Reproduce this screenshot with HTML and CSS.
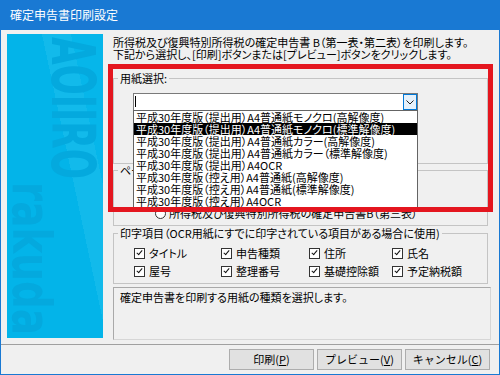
FILE: index.html
```html
<html>
<head>
<title>確定申告書印刷設定</title>
<meta charset="utf-8">
<link rel="stylesheet" href="styles.css">
</head>
<body>
<div class="window">
<div class="titlebar">確定申告書印刷設定</div>
<div class="client">
<div class="main">
<div class="banner">
<span class="wm wm-top">AOIIRO</span>
<span class="wm wm-bottom">rakuda</span>
</div>
<div class="content">
<p class="intro">所得税及び復興特別所得税の確定申告書 B（第一表・第二表）を印刷します。<br>下記から選択し、[印刷]ボタンまたは[プレビュー]ボタンをクリックします。</p>
<fieldset class="group group-paper">
<legend>用紙選択:</legend>
<div class="combo"><span class="caret"></span><span class="combo-btn"><svg width="8" height="5" viewBox="0 0 8 5"><polyline points="0.5,0.5 4,4 7.5,0.5" fill="none" stroke="#222" stroke-width="1"/></svg></span></div>
</fieldset>
<fieldset class="group group-page">
<legend>ページ指定</legend>
<label class="radio"><span class="radio-dot"></span>所得税及び復興特別所得税の確定申告書B（第三表）</label>
</fieldset>
<fieldset class="group group-items">
<legend>印字項目（OCR用紙にすでに印字されている項目がある場合に使用)</legend>
<div class="checks">
<label class="check"><span class="box"></span>タイトル</label>
<label class="check"><span class="box"></span>申告種類</label>
<label class="check"><span class="box"></span>住所</label>
<label class="check"><span class="box"></span>氏名</label>
<label class="check"><span class="box"></span>屋号</label>
<label class="check"><span class="box"></span>整理番号</label>
<label class="check"><span class="box"></span>基礎控除額</label>
<label class="check"><span class="box"></span>予定納税額</label>
</div>
</fieldset>
<div class="desc">確定申告書を印刷する用紙の種類を選択します。</div>
<ul class="droplist">
<li>平成30年度版（提出用）A4普通紙モノクロ(高解像度)</li>
<li class="sel">平成30年度版（提出用）A4普通紙モノクロ(標準解像度)</li>
<li>平成30年度版（提出用）A4普通紙カラー(高解像度)</li>
<li>平成30年度版（提出用）A4普通紙カラー（標準解像度)</li>
<li>平成30年度版（提出用）A4OCR</li>
<li>平成30年度版（控え用）A4普通紙(高解像度)</li>
<li>平成30年度版（控え用）A4普通紙(標準解像度)</li>
<li>平成30年度版（控え用）A4OCR</li>
</ul>
<div class="highlight"></div>
</div>
</div>
<div class="buttons">
<button>印刷(<u>P</u>)</button>
<button>プレビュー(<u>V</u>)</button>
<button>キャンセル(<u>C</u>)</button>
</div>
</div>
</div>
</body>
</html>
```
FILE: styles.css
```css
:root{--blue: #1979d3; --face: #f0f0f0; --line: #c4c4c4; --red: #e4161f;}
html,body{margin: 0;padding: 0;}
body{width: 500px;height: 375px;overflow: hidden;background: var(--face);font-family: "Noto Sans CJK JP", "Noto Sans", sans-serif;font-size: 11px;color: #000;font-feature-settings: "palt";}
.window{box-sizing: border-box;width: 500px;height: 375px;border: 1px solid var(--blue);border-top: none;display: flex;flex-direction: column;}
.titlebar{height: 30px;margin: 0 -1px;padding-left: 10px;background: var(--blue);color: #fff;font-size: 12px;line-height: 30px;}
.client{flex: 1;display: flex;flex-direction: column;padding: 4px 8px 0 6px;}
.main{display: flex;gap: 10px;height: 306px;}

/* left picture */
.banner{width: 96px;height: 304px;position: relative;overflow: hidden;background: linear-gradient(78deg, #03b4e9 0%, #03b4e9 62%, #12baeb 62%, #12baeb 80%, #06b6ea 80%);}
.wm{position: absolute;white-space: nowrap;font-family: "DejaVu Sans Condensed", "DejaVu Sans", sans-serif;font-weight: bold;color: #04a9de;transform-origin: 0 0;}
.wm-top{left: 88px;top: 3px;font-size: 60px;line-height: 45px;transform: rotate(90deg) scaleX(0.66);}
.wm-bottom{left: 45px;top: 148px;font-size: 54px;line-height: 42px;transform: rotate(90deg) scaleX(0.8);}

.content{flex: 1;position: relative;}
.intro{margin: 2px 0 0;line-height: 12px;}
.group{box-sizing: border-box;margin: 0;padding: 0;min-width: 0;border: 1px solid var(--line);}
.group legend{margin-left: 4px;padding: 0 2px;line-height: 12px;}
.group-paper{margin-top: 12px;height: 92px;width: 375px;}
.group-page{height: 62px;width: 375px;}
.group-items{margin-top: 1px;height: 57px;width: 375px;}

.combo{box-sizing: border-box;width: 285px;height: 18px;margin: 9px 0 0 19px;display: flex;background: #fff;border: 1px solid #7a7a7a;}
.caret{width: 1px;height: 11px;margin: 2px 0 0 1px;background: #000;}
.combo-btn{box-sizing: border-box;width: 14px;height: 16px;margin-left: auto;display: flex;align-items: center;justify-content: center;background: #e5f1fb;border: 1px solid #0078d7;}

.radio{display: flex;align-items: center;gap: 3px;margin: 31px 0 0 41px;line-height: 12px;}
.radio-dot{box-sizing: border-box;width: 11px;height: 11px;border: 1px solid #333;border-radius: 50%;background: #fff;}

.checks{display: grid;grid-template-columns: 87px 88px 83px auto;row-gap: 4px;margin: 7px 0 0 20px;}
.check{display: flex;align-items: center;gap: 4px;height: 14px;line-height: 12px;}
.box{box-sizing: border-box;width: 11px;height: 11px;border: 1px solid #333;background: #fff;position: relative;}
.box::after{content: "";position: absolute;left: 3px;top: 0;width: 2px;height: 5px;border-right: 1.5px solid #111;border-bottom: 1.5px solid #111;transform: rotate(40deg);}

.desc{box-sizing: border-box;height: 53px;margin-top: 3px;padding: 3px 6px 0;line-height: 12px;border: 1px solid #a9a9a9;border-right-color: #d6d6d6;border-bottom-color: #d6d6d6;}

/* open dropdown and annotation frame */
.droplist{position: absolute;left: 20px;top: 76px;box-sizing: border-box;width: 285px;margin: 0;padding: 0;list-style: none;background: #fff;border: 1px solid #646464;}
.droplist li{height: 12px;line-height: 12px;padding-left: 2px;white-space: nowrap;}
.droplist li.sel{background: #000;color: #fff;}
.highlight{position: absolute;left: -5px;top: 30px;box-sizing: border-box;width: 385px;height: 148px;border: 5px solid var(--red);}

.buttons{display: flex;justify-content: flex-end;gap: 3px;margin: 4px -8px 0 -6px;padding: 4px 9px 0 0;border-top: 1px solid #a0a0a0;}
.buttons button{width: 85px;height: 21px;padding: 0;font-family: inherit;font-size: 11px;line-height: 19px;color: #000;background: #e1e1e1;border: 1px solid #adadad;border-radius: 0;}
```
